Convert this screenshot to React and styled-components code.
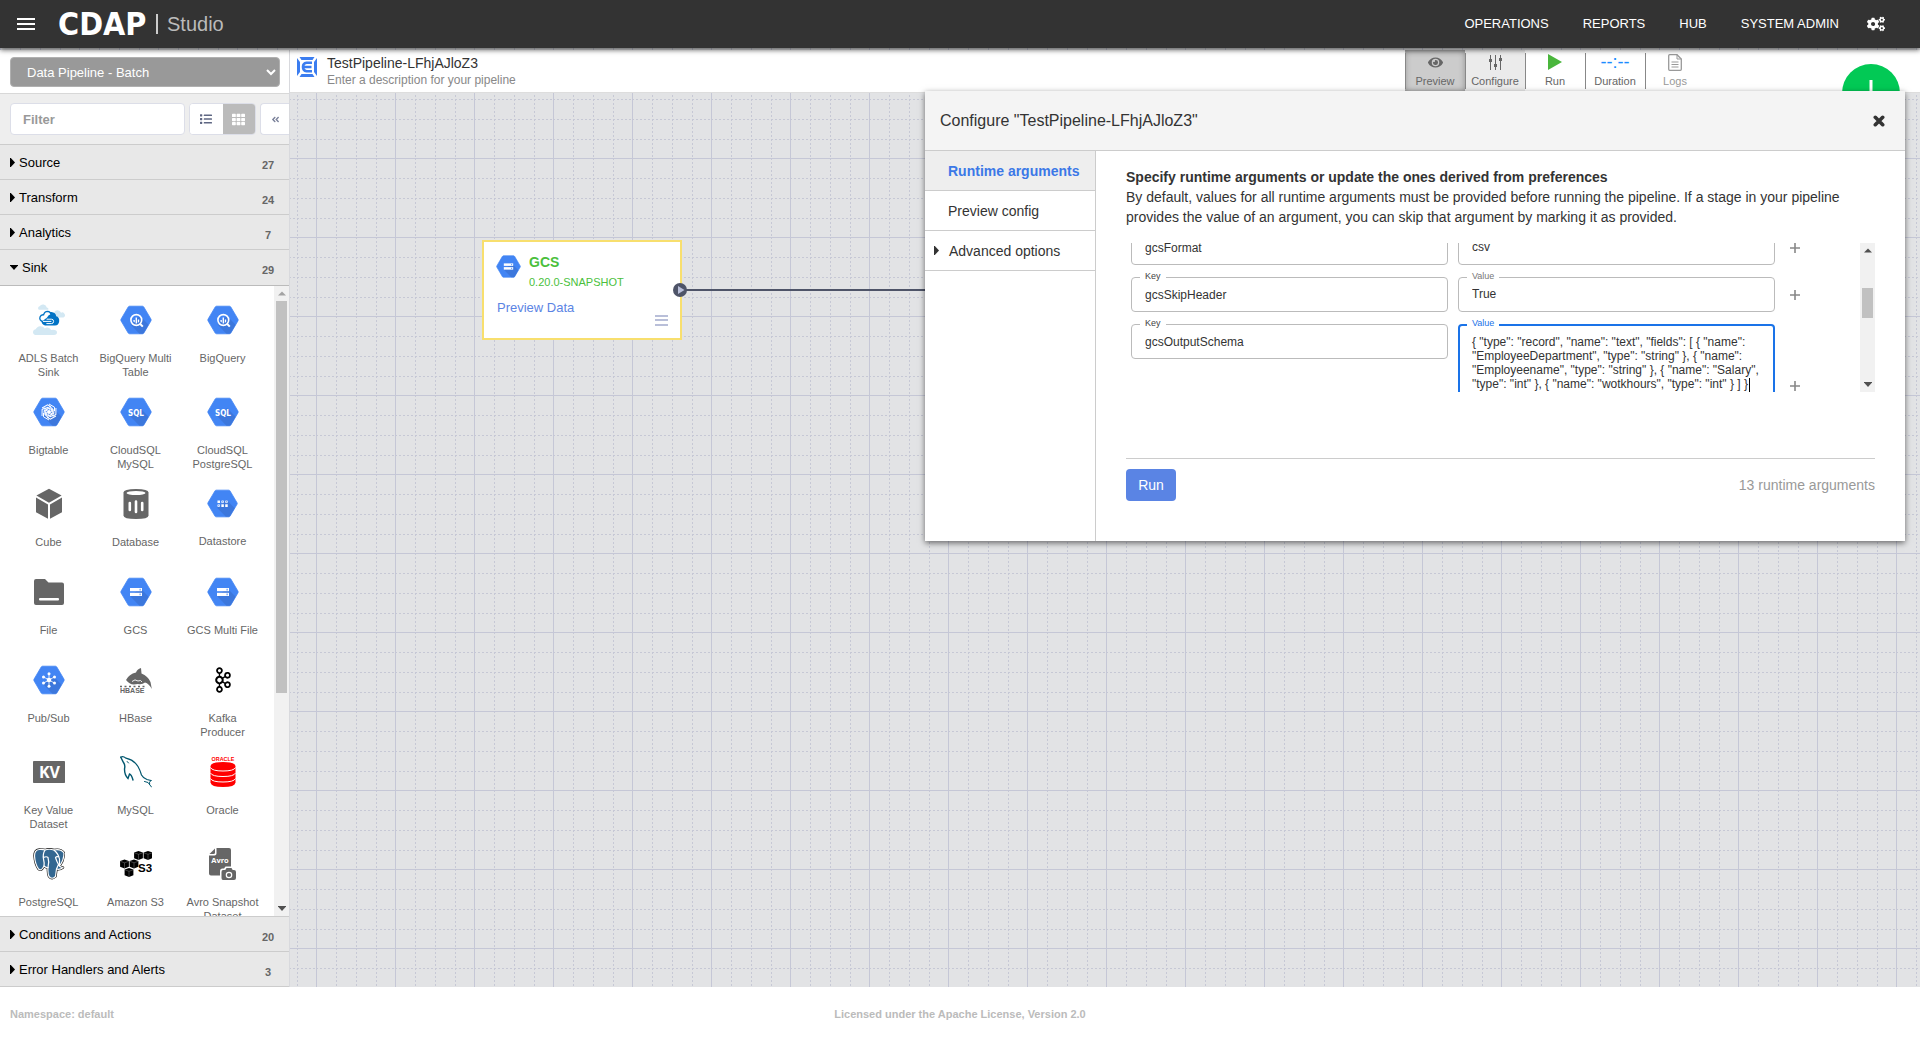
import React from "react";
import styled, { createGlobalStyle, css } from "styled-components";
import { FaAngleDoubleLeft, FaCogs, FaEye, FaList, FaTh } from "react-icons/fa";
import { SiApachekafka } from "react-icons/si";

const GlobalStyle = createGlobalStyle`
  *, *::before, *::after { box-sizing: border-box; }
  body {
    margin: 0;
    background: #fff;
    color: #333;
    font-family: "Liberation Sans", Arial, sans-serif;
    font-size: 13px;
  }
  button, input, select, textarea { font: inherit; color: inherit; margin: 0; }
  svg { display: block; }
`;

const plainButton = css`
  appearance: none;
  border: 0;
  padding: 0;
  background: none;
  cursor: pointer;
`;

/* ---------- page frame ---------- */

const Page = styled.div`
  display: flex;
  flex-direction: column;
  height: 100vh;
`;

const Body = styled.main`
  position: relative;
  display: flex;
  flex: 1;
  min-height: 0;
  padding-top: 2px;
  background: #e2e3e5;
`;

const GridBackdrop = styled.svg`
  position: absolute;
  inset: 0;
  width: 100%;
  height: 100%;
`;

const Footer = styled.footer`
  display: grid;
  grid-template-columns: 1fr auto 1fr;
  align-items: center;
  flex: none;
  height: 53px;
  padding: 0 10px;
  background: #fff;
  color: #bbb;
  font-size: 11px;
  font-weight: bold;
`;

/* ---------- header ---------- */

const Header = styled.header`
  position: relative;
  z-index: 5;
  display: flex;
  align-items: center;
  flex: none;
  height: 48px;
  padding: 0 35px 0 17px;
  background: #333;
  box-shadow: 0 2px 5px rgba(0, 0, 0, 0.6);
  color: #fff;
`;

const IconButton = styled.button`
  ${plainButton}
  display: flex;
  align-items: center;
  justify-content: center;
  color: inherit;
`;

const Brand = styled.a`
  display: flex;
  align-items: center;
  margin-left: 23px;
  color: #fff;
  text-decoration: none;
`;

const Wordmark = styled.span`
  width: 98px;
  font: bold 32px/48px "DejaVu Sans Condensed", "DejaVu Sans", sans-serif;
`;

const Product = styled.span`
  padding-left: 9px;
  border-left: 2px solid #ccc;
  color: #bbb;
  font-size: 20px;
  line-height: 20px;
`;

const Nav = styled.nav`
  display: flex;
  margin-left: auto;
  margin-right: 11px;
`;

const NavLink = styled.a`
  padding: 0 17px;
  color: #fff;
  text-decoration: none;
  line-height: 48px;
`;

/* ---------- sidebar ---------- */

const Sidebar = styled.aside`
  position: relative;
  display: flex;
  flex-direction: column;
  flex: none;
  width: 290px;
  overflow: hidden;
  border-right: 1px solid #d8d9dd;
  background: #fff;
`;

const TypePicker = styled.div`
  position: relative;
  flex: none;
  padding: 7px 9px 6px 10px;
  border-bottom: 1px solid #d8d8d8;

  svg {
    position: absolute;
    top: 19px;
    right: 13px;
    pointer-events: none;
  }
`;

const TypeSelect = styled.select`
  appearance: none;
  display: block;
  width: 100%;
  height: 30px;
  padding: 0 16px;
  border: 1px solid #b0b0b0;
  border-radius: 4px;
  background: #999;
  color: #fff;
`;

const FilterBar = styled.div`
  display: flex;
  gap: 4px;
  flex: none;
  height: 51px;
  padding: 9px 0 9px 10px;
  border-bottom: 1px solid #ccc;
  background: #eee;
`;

const FilterInput = styled.input`
  width: 175px;
  height: 32px;
  padding: 0 12px;
  border: 1px solid #dcdee8;
  border-radius: 4px;
  background: #fff;

  &::placeholder {
    color: #999;
    font-weight: bold;
    opacity: 1;
  }
`;

const ViewToggle = styled.div`
  display: flex;
  width: 67px;
  height: 32px;
  overflow: hidden;
  border: 1px solid #dcdee8;
  border-radius: 4px;
  background: #fff;
`;

const ViewButton = styled(IconButton)`
  flex: 1;
  background: ${(p) => (p.$active ? "#bbb" : "#fff")};
  color: ${(p) => (p.$active ? "#fff" : "#5f6783")};
`;

const CollapseButton = styled(IconButton)`
  flex: 1;
  height: 32px;
  border: 1px solid #dcdee8;
  border-right: 0;
  border-radius: 4px 0 0 4px;
  background: #fff;
  color: #7a819a;
`;

const GroupButton = styled.button`
  ${plainButton}
  display: flex;
  align-items: center;
  flex: none;
  gap: 4px;
  width: 100%;
  height: ${(p) => (p.$open ? "36px" : "35px")};
  padding: 0 15px 0 10px;
  border-bottom: 1px solid ${(p) => (p.$open ? "#bbb" : "#ccc")};
  background: #e8e8e8;
  color: #000;
  text-align: left;
`;

const Count = styled.span`
  width: 12px;
  margin-left: auto;
  padding-top: 5px;
  color: #666;
  font-size: 11px;
  font-weight: bold;
  text-align: center;
`;

const PluginPanel = styled.div`
  display: flex;
  flex: 1;
  min-height: 0;
  border-bottom: 1px solid #ccc;
`;

const PluginGrid = styled.ul`
  display: grid;
  grid-template-columns: repeat(3, 1fr);
  align-content: start;
  flex: 1;
  margin: 0;
  padding: 9px 8px 0 5px;
  overflow: hidden;
  list-style: none;
`;

const PluginButton = styled.button`
  ${plainButton}
  display: flex;
  flex-direction: column;
  align-items: center;
  gap: 15px;
  width: 100%;
  min-height: 88px;
  padding: 9px 6px 8px;
  color: #666;
  font-size: 11px;
  line-height: 14px;
`;

const ScrollTrack = styled.div`
  display: flex;
  flex-direction: column;
  align-items: center;
  flex: none;
  width: 15px;
  background: #f1f1f1;
`;

const ScrollArrow = styled.span`
  display: flex;
  align-items: center;
  justify-content: center;
  flex: none;
  width: 15px;
  height: 15px;
  color: ${(p) => (p.$dim ? "#a3a3a3" : "#505050")};
`;

const ScrollGap = styled.span`
  flex: ${(p) => p.$share};
`;

const ScrollThumb = styled.span`
  flex: ${(p) => p.$share};
  width: 11px;
  background: #c1c1c1;
`;

/* ---------- pipeline bar and canvas ---------- */

const Workspace = styled.section`
  position: relative;
  display: flex;
  flex: 1;
  flex-direction: column;
  min-width: 0;
`;

const PipelineBar = styled.div`
  display: flex;
  flex: none;
  height: 43px;
  padding-left: 7px;
  border-bottom: 1px solid #ddd;
  background: #fff;
`;

const PipelineIcon = styled.svg`
  margin-top: 7px;
`;

const PipelineText = styled.div`
  padding: 4px 0 0 10px;
`;

const PipelineName = styled.h1`
  margin: 0;
  font-size: 14px;
  font-weight: normal;
  line-height: 18px;
`;

const PipelineDescription = styled.p`
  margin: 0;
  color: #888;
  font-size: 12px;
  line-height: 16px;
`;

const Tools = styled.div`
  display: flex;
  margin: 0 215px 0 auto;
`;

const Tool = styled.button`
  ${plainButton}
  position: relative;
  display: flex;
  flex-direction: column;
  align-items: center;
  width: 60px;
  height: 41px;
  background: ${(p) => p.$fill || "transparent"};
  box-shadow: ${(p) => (p.$pressed ? "inset 0 1px 6px rgba(0, 0, 0, 0.3)" : "none")};
  color: ${(p) => (p.$faded ? "#999" : "#666")};
  font-size: 11px;
  line-height: 14px;

  &::before {
    content: "";
    position: absolute;
    top: 3px;
    bottom: 2px;
    left: 0;
    border-left: 1px solid #888;
  }
`;

const ToolGlyph = styled.span`
  display: flex;
  align-items: center;
  justify-content: center;
  height: 24px;
  color: ${(p) => p.$color || "inherit"};
  font-size: 18px;
`;

const AddButton = styled.button`
  ${plainButton}
  position: absolute;
  top: 14px;
  right: 20px;
  display: flex;
  align-items: center;
  justify-content: center;
  width: 58px;
  height: 58px;
  border-radius: 50%;
  background: #02c955;
`;

const Canvas = styled.div`
  position: relative;
  flex: 1;
  overflow: hidden;
`;

const Connection = styled.svg`
  position: absolute;
  top: 190px;
  left: 383px;
`;

const Node = styled.article`
  position: absolute;
  top: 147px;
  left: 192px;
  display: grid;
  grid-template-columns: 25px 1fr;
  column-gap: 8px;
  align-content: start;
  width: 200px;
  height: 100px;
  padding: 10px 12px;
  border: 2px solid #f8df6e;
  background: #fff;
`;

const NodeIcon = styled.div`
  padding-top: 2px;
`;

const NodeTitle = styled.div`
  color: #4bbf3c;
  font-size: 11px;
  line-height: 20px;

  strong {
    display: block;
    font-size: 14px;
  }
`;

const NodeLink = styled.a`
  grid-column: 1 / -1;
  padding-top: 8px;
  padding-left: 1px;
  color: #5b84e4;
  line-height: 15px;
  text-decoration: none;
`;

const NodeMenu = styled(IconButton)`
  position: absolute;
  right: 12px;
  bottom: 12px;
`;

/* ---------- configure dialog ---------- */

const Dialog = styled.section`
  position: absolute;
  top: 41px;
  right: 15px;
  width: 980px;
  background: #fff;
  box-shadow: 0 2px 6px rgba(0, 0, 0, 0.55);
`;

const DialogHeader = styled.header`
  display: flex;
  align-items: center;
  justify-content: space-between;
  height: 60px;
  padding: 0 20px 0 15px;
  border-bottom: 1px solid #ccc;
  background: #f4f4f4;

  h2 {
    margin: 0;
    font-size: 16px;
    font-weight: normal;
  }
`;

const DialogBody = styled.div`
  display: flex;
  min-height: 390px;
`;

const Tabs = styled.nav`
  flex: none;
  width: 171px;
  border-right: 1px solid #ccc;
`;

const Tab = styled.button`
  ${plainButton}
  display: flex;
  align-items: center;
  gap: 10px;
  width: 100%;
  height: 40px;
  padding-left: ${(p) => (p.$nested ? "9px" : "23px")};
  border-bottom: 1px solid #ccc;
  background: ${(p) => (p.$active ? "#eee" : "#fff")};
  color: ${(p) => (p.$active ? "#3b78e7" : "#333")};
  font-size: 14px;
  font-weight: ${(p) => (p.$active ? "bold" : "normal")};
`;

const Content = styled.div`
  flex: 1;
  min-width: 0;
  padding: 16px 30px 0;
  font-size: 14px;
  line-height: 20px;

  p { margin: 0 0 16px; }
  strong { display: block; }
`;

const ArgumentArea = styled.div`
  display: flex;
  height: 149px;
  overflow: hidden;
`;

const ArgumentList = styled.div`
  display: flex;
  flex: 1;
  flex-direction: column;
  gap: 12px;
  margin-top: -13px;
  padding-left: 5px;
`;

const ArgumentRow = styled.div`
  display: flex;
  align-items: flex-start;
  flex: none;
  gap: 10px;

  > button { align-self: center; }
`;

const Field = styled.div`
  position: relative;
  flex: none;
  width: 317px;
`;

const FieldLabel = styled.label`
  position: absolute;
  top: -6px;
  left: 9px;
  padding: 0 5px;
  background: #fff;
  color: ${(p) => p.$color};
  font-size: 9px;
  line-height: 11px;
`;

const boxed = css`
  display: block;
  width: 100%;
  border: 1px solid #bbb;
  border-radius: 4px;
  background: #fff;
  color: #333;
  font-size: 12px;
  outline: none;
`;

const FieldInput = styled.input`
  ${boxed}
  height: 35px;
  padding: ${(p) => (p.$raised ? "0 13px 2px" : "0 13px")};
`;

const FieldArea = styled.textarea`
  ${boxed}
  height: 124px;
  padding: 9px 12px;
  border: 2px solid #1a73e8;
  line-height: 14px;
  resize: none;
  overflow: hidden;
`;

const TextCursor = styled.span`
  position: absolute;
  top: 54px;
  right: 25px;
  width: 1px;
  height: 14px;
  background: #000;
`;

const AddRow = styled(IconButton)`
  width: 20px;
  height: 24px;
`;

const DialogFooter = styled.div`
  display: flex;
  align-items: center;
  justify-content: space-between;
  margin-top: 66px;
  padding-top: 10px;
  border-top: 1px solid #ccc;
  color: #999;
`;

const RunButton = styled.button`
  ${plainButton}
  width: 50px;
  height: 32px;
  border-radius: 4px;
  background: #5a84e4;
  color: #fff;
`;

/* ---------- drawings ---------- */

const Bars = ({ width, height, color }) => (
  <svg width={width} height={height} fill={color} aria-hidden="true">
    <rect width={width} height="2" />
    <rect y={Math.floor((height - 2) / 2)} width={width} height="2" />
    <rect y={height - 2} width={width} height="2" />
  </svg>
);

const CaretRight = () => (
  <svg width="5" height="9" aria-hidden="true"><path d="M0 0H.8L5 4.500L.8 9H0z" fill="currentColor" /></svg>
);
const CaretDown = () => (
  <svg width="8" height="5" aria-hidden="true"><path d="M0 0H8V.5L4 5L0 .5z" fill="currentColor" /></svg>
);
const CaretUp = () => (
  <svg width="8" height="5" aria-hidden="true"><path d="M0 4.500H8L4 .5z" fill="currentColor" /></svg>
);

const Plus = () => (
  <svg width="10" height="10" stroke="#888" strokeWidth="1.600" aria-hidden="true"><path d="M5 0V10M0 5H10" /></svg>
);

const Cross = () => (
  <svg width="12" height="12" stroke="#333" strokeWidth="3.600" strokeLinecap="round" aria-hidden="true"><path d="M2.300 2.300L9.700 9.700M9.700 2.300L2.300 9.700" /></svg>
);

const HEX = "M9.6 2.2H22.4Q23.3 2.2 23.8 3L31 15.2Q31.4 16 31 16.8L23.8 29Q23.3 29.8 22.4 29.8H9.6Q8.7 29.8 8.2 29L1 16.8Q.6 16 1 15.2L8.2 3Q8.7 2.2 9.6 2.2z";

const Hex = ({ size = 32, shade = "M20 12L28.6 20.8L23.8 29Q23.3 29.8 22.4 29.8H19.5L10.5 20.5z", children }) => (
  <svg width={size} height={size} viewBox="0 0 32 32" aria-hidden="true">
    <path d={HEX} fill="#4285f4" stroke="#4285f4" strokeWidth=".8" />
    <path d={shade} fill="#3b73d6" opacity=".8" />
    {children}
  </svg>
);

const StorageHex = ({ size }) => (
  <Hex size={size}>
    <rect x="10" y="12" width="12" height="3.2" fill="#fff" />
    <rect x="10" y="16.800" width="12" height="3.2" fill="#fff" />
    <path d="M19.6 12.8h1v1.6h-1zM19.6 17.600h1v1.6h-1z" fill="#4285f4" />
  </Hex>
);

const QueryHex = () => (
  <Hex>
    <circle cx="16.3" cy="16" r="5.4" fill="none" stroke="#fff" strokeWidth="1.6" />
    <path d="M20.2 20L22.8 22.6" stroke="#fff" strokeWidth="2" />
    <path d="M13.4 16h1.4v2.6l-1.4-1zM15.6 13.4h1.4v6h-1.4zM17.8 15.4h1.4v2.4l-1.4 1.2z" fill="#fff" />
  </Hex>
);

const SqlHex = () => (
  <Hex>
    <text x="16" y="19.500" textAnchor="middle" fill="#fff" fontSize="8" fontWeight="bold" fontFamily="'DejaVu Sans Condensed', sans-serif">SQL</text>
  </Hex>
);

const BigtableHex = () => (
  <Hex>
    <g fill="none" stroke="#fff" strokeWidth="1">
      {[0, 60, 120, 180, 240, 300].map((turn) => (
        <path key={turn} transform={`rotate(${turn} 16 16)`} d="M16 8L21.5 11.2V15M16 10.4L19.4 12.4V16M14 12L17.5 13.6" />
      ))}
    </g>
    <circle cx="16" cy="16" r="2" fill="#fff" />
  </Hex>
);

const DatastoreHex = () => (
  <Hex size={31}>
    <g fill="none" stroke="#fff" strokeWidth=".8">
      <path d="M15.200 13.300h1.800v1.800h-1.800zM19.200 13.300h1.800v1.800h-1.800zM11.200 17.300h1.800v1.800h-1.800z" />
    </g>
    <path d="M10.800 12.900h2.600v2.600h-2.600zM14.800 16.900h2.600v2.600h-2.600zM18.800 16.900h2.600v2.600h-2.600z" fill="#fff" />
  </Hex>
);

const PubSubHex = () => (
  <Hex>
    <path d="M16 16V9.6M16 16V22.4M16 16L10.4 12.8M16 16L21.6 12.8M16 16L10.4 19.2M16 16L21.6 19.2" stroke="#fff" strokeWidth=".8" />
    <circle cx="16" cy="16" r="2.3" fill="#fff" />
    {[[16, 9.7], [16, 22.3], [10.5, 12.9], [21.5, 12.9], [10.5, 19.1], [21.5, 19.1]].map(([x, y]) => (
      <circle key={`${x}-${y}`} cx={x} cy={y} r="1.5" fill="#fff" />
    ))}
  </Hex>
);

const Adls = () => (
  <svg width="32" height="32" viewBox="0 0 32 32" aria-hidden="true">
    <path d="M6 5.8a2 2 0 0 1 .6-3.6 4 4 0 0 1 7.2 1.3 1.7 1.7 0 0 1 1.4 2.3zM21 13.5V9a3.6 3.6 0 0 1 7-.2 2.5 2.5 0 0 1 2.5 4.7zM2 31a3 3 0 0 1 .6-5.8 5.4 5.4 0 0 1 9.2-.8A4 4 0 0 1 18 26q6-.8 6 2.6 0 2.4-3 2.4z" fill="#d3e8f3" />
    <path d="M12 21.5a4.6 4.6 0 0 1 .4-9q1.6-5 6-4.5 4.3.5 4.8 4.3 3.3.8 3 5-.5 4.2-4.2 4.2z" fill="#0273c5" />
    <path d="M10 17.600Q6 16.500 7 13q1-2.600 3.600-2.200.8-3.400 4-3.400 2.800.3 3.500 3.200Q15.500 11.500 14.500 14z" fill="#fff" stroke="#0273c5" strokeWidth="1.3" />
    <path d="M10 17.400h8.400M13.600 15.200h4.800a1.400 1.400 0 1 1 0 4.400h-5" fill="none" stroke="#fff" strokeWidth="1" />
  </svg>
);

const Cube = () => (
  <svg width="32" height="32" viewBox="0 0 32 32" fill="#666" aria-hidden="true">
    <path d="M16 .8L28.6 7.6L16 14.8L3.4 7.6zM3 9.6L15 16.6V30.8L3 24.2zM29 9.6L17 16.6V30.8L29 24.2z" />
  </svg>
);

const Database = () => (
  <svg width="32" height="32" viewBox="0 0 32 32" aria-hidden="true">
    <path d="M3.5 4.5Q3.5 1 16 1T28.500 4.500V27.500Q28.500 31 16 31T3.500 27.500z" fill="#666" />
    <ellipse cx="16" cy="5" rx="9.500" ry="2" fill="#fff" />
    <path d="M9.800 15V22M16 13.500V24M22.200 15V22" stroke="#fff" strokeWidth="2.600" strokeLinecap="round" />
  </svg>
);

const Folder = () => (
  <svg width="32" height="32" viewBox="0 0 32 32" aria-hidden="true">
    <path d="M3 3H12L15.500 6.500H29Q31 6.500 31 8.500V27Q31 29 29 29H3Q1 29 1 27V5Q1 3 3 3z" fill="#666" />
    <rect x="6" y="22" width="20" height="2.400" rx="1" fill="#fff" />
  </svg>
);

const HBase = () => (
  <svg width="32" height="32" viewBox="0 0 32 32" aria-hidden="true">
    <path d="M6 16Q9 10 16 8.500Q17 5 21 4L21.500 9.500Q28 12 30.500 18L31.800 25Q29 19.500 25 18.500Q22 21 18 20Q12 21 10 19.500Q8 18.500 6 16z" fill="#666" />
    <path d="M12 17.500Q15 14.500 18 17Q21 15.500 22 18" fill="none" stroke="#fff" strokeWidth=".9" />
    <path d="M0 22.500H27" stroke="#666" strokeWidth="1.500" strokeDasharray="2 2.500" />
    <text x="0" y="28.500" fill="#666" fontSize="7" fontWeight="bold" fontFamily="'Liberation Sans', sans-serif">HBASE</text>
  </svg>
);

const KeyValue = () => (
  <svg width="32" height="32" viewBox="0 0 32 32" aria-hidden="true">
    <rect y="5" width="32" height="22" rx=".8" fill="#666" />
    <text x="16.500" y="21.700" textAnchor="middle" fill="#fff" fontSize="16" fontWeight="bold" fontFamily="'Open Sans', sans-serif">KV</text>
  </svg>
);

const MySql = () => (
  <svg width="32" height="32" viewBox="0 0 32 32" fill="none" stroke="#00566e" strokeLinecap="round" aria-hidden="true">
    <path d="M.8 1.200Q3-.2 6 2.200Q14 4 18 10.500Q20 14 21.500 19Q23 22 27 23.500L31 24.500" strokeWidth="1.200" />
    <path d="M.8 1.200L3.500 6.500Q5.500 9 4.500 13Q4.500 19 8 22.500L9.500 18Q11.500 18.500 13 24" strokeWidth="1.400" />
    <path d="M24.500 25.500L28 26.500L31.500 31M31 24.500Q28.500 26 29.500 28" strokeWidth="1" />
    <path d="M7.200 5.500L8.500 7" strokeWidth="1" />
  </svg>
);

const Oracle = () => (
  <svg width="32" height="32" viewBox="0 0 32 32" aria-hidden="true">
    <text x="16" y="4.500" textAnchor="middle" fill="#f00" fontSize="5.400" fontWeight="bold" fontFamily="'Liberation Sans', sans-serif">ORACLE</text>
    <path d="M3.500 10Q4 6 16 6T28.500 10V26.500Q28 31 16 31T3.500 26.500z" fill="#f00" />
    <path d="M3.500 11.500Q5 15 16 15T28.500 11.500M3.500 17Q5 20.500 16 20.500T28.500 17M3.500 22.500Q5 26 16 26T28.500 22.500" fill="none" stroke="#fff" strokeWidth="1" />
  </svg>
);

const Postgres = () => (
  <svg width="32" height="32" viewBox="0 0 32 32" strokeLinejoin="round" strokeLinecap="round" aria-hidden="true">
    <g stroke="#111" strokeWidth="2.400" fill="#111">
      <path d="M6 1.500Q1.500 2 1.500 8Q2 16 5.500 21Q7.500 23 9.500 20.500L11 18Q13 20 15 19.500Q14.500 25 16 28.500Q19 32 22.500 28.500L23.500 21Q27 22 30 19.500Q28 19.500 26.500 18Q31 12 31 5Q28 .5 21 2Q16 .5 12 2Q9 1 6 1.500z" />
    </g>
    <g stroke="#fff" strokeWidth="1.200" fill="#336791">
      <path d="M6 1.500Q1.500 2 1.500 8Q2 16 5.500 21Q7.500 23 9.500 20.500L11 18Q13 20 15 19.500Q14.500 25 16 28.500Q19 32 22.500 28.500L23.500 21Q27 22 30 19.500Q28 19.500 26.500 18Q31 12 31 5Q28 .5 21 2Q16 .5 12 2Q9 1 6 1.500z" />
      <path d="M12 2Q9.500 6 10.500 11Q11.500 15 11 18M10.500 9.500Q13.500 8 15 9.500Q16.500 14 15 19.500" fill="none" />
      <path d="M21 2Q25.500 6 26.500 11Q26.500 15 26.500 18M26 9Q23.500 8 22.500 9.500Q23.500 13 25.500 16.500L23.500 21" fill="none" />
    </g>
  </svg>
);

const S3 = () => (
  <svg width="32" height="32" viewBox="0 0 32 32" aria-hidden="true">
    {[[14, 3], [23.500, 3], [0, 11.500], [9.500, 11.500], [4.500, 20]].map(([x, y]) => (
      <g key={`${x}-${y}`} transform={`translate(${x} ${y})`}>
        <path d="M4.500 0L8.900 1.500V7.200L4.500 9L.1 7.200V1.500z" />
        <path d="M.3 1.800L4.500 3.300L8.700 1.800M4.500 3.300V9" fill="none" stroke="#999" strokeWidth=".4" />
      </g>
    ))}
    <text x="18" y="24" fontSize="11.500" fontWeight="bold" fontFamily="'Liberation Sans', sans-serif">S3</text>
  </svg>
);

const Avro = () => (
  <svg width="32" height="32" viewBox="0 0 32 32" aria-hidden="true">
    <path d="M9.500 0H22Q24 0 24 2V18.500H18.500L17 20.500H15.500Q13 20.500 13 23V27.500H4Q2 27.500 2 25.500V7.500H7.500Q9.500 7.500 9.500 5.500z" fill="#666" />
    <path d="M2.500 6L8 .500V4.500Q8 6 6.500 6z" fill="#666" />
    <text x="13" y="15" textAnchor="middle" fill="#fff" fontSize="7.500" fontWeight="bold" fontFamily="'Open Sans', sans-serif">Avro</text>
    <path d="M16 22H18.300L19.500 20H24.500L25.700 22H27Q29 22 29 24V30Q29 32 27 32H16Q14.500 32 14.500 30V24Q14.500 22 16 22z" fill="#666" />
    <circle cx="22" cy="27" r="2.700" fill="none" stroke="#fff" strokeWidth="1.200" />
  </svg>
);

const Sliders = () => (
  <svg width="13" height="15" viewBox="0 0 13 15" fill="#666" aria-hidden="true">
    <path d="M1 0h1v15H1zM6 0h1v15H6zM11 0h1v15h-1z" />
    <rect y="4" width="3" height="3" /><rect x="5" y="9" width="3" height="3" /><rect x="10" y="3" width="3" height="3" />
  </svg>
);

const Play = () => (
  <svg width="14" height="16" aria-hidden="true"><path d="M0 0L14 8L0 16z" fill="#4ab63c" /></svg>
);

const LogFile = () => (
  <svg width="14" height="17" viewBox="0 0 14 17" fill="none" stroke="#999" aria-hidden="true">
    <path d="M.7 1.700Q.7.7 1.700.7H9L13.300 5V15.300Q13.300 16.300 12.300 16.300H1.700Q.7 16.300.7 15.300z" strokeWidth="1.300" />
    <path d="M9 .7V5H13.300M3.500 8H10.500M3.500 10.500H10.500M3.500 13H10.500" />
  </svg>
);

/* ---------- data ---------- */

const sinks = [
  ["ADLS Batch Sink", <Adls />],
  ["BigQuery Multi Table", <QueryHex />],
  ["BigQuery", <QueryHex />],
  ["Bigtable", <BigtableHex />],
  ["CloudSQL MySQL", <SqlHex />],
  ["CloudSQL PostgreSQL", <SqlHex />],
  ["Cube", <Cube />],
  ["Database", <Database />],
  ["Datastore", <DatastoreHex />],
  ["File", <Folder />],
  ["GCS", <StorageHex />],
  ["GCS Multi File", <StorageHex />],
  ["Pub/Sub", <PubSubHex />],
  ["HBase", <HBase />],
  ["Kafka Producer", <SiApachekafka size={32} viewBox="-3 -3 30 30" color="#000" />],
  ["Key Value Dataset", <KeyValue />],
  ["MySQL", <MySql />],
  ["Oracle", <Oracle />],
  ["PostgreSQL", <Postgres />],
  ["Amazon S3", <S3 />],
  ["Avro Snapshot Dataset", <Avro />],
];

const schema =
  '{ "type": "record", "name": "text", "fields": [ { "name": "EmployeeDepartment", "type": "string" }, { "name": "Employeename", "type": "string" }, { "name": "Salary", "type": "int" }, { "name": "wotkhours", "type": "int" } ] }';

const runtimeArgs = [
  { key: "gcsFormat", value: "csv" },
  { key: "gcsSkipHeader", value: "True" },
  { key: "gcsOutputSchema", value: schema, editing: true },
];

/* ---------- parts ---------- */

const Group = ({ name, count, open }) => (
  <GroupButton type="button" $open={open} aria-expanded={!!open}>
    {open ? <CaretDown /> : <CaretRight />}
    {name}
    <Count>{count}</Count>
  </GroupButton>
);

const Scrollbar = ({ before, thumb, after }) => (
  <ScrollTrack aria-hidden="true">
    <ScrollArrow $dim={before === 0}><CaretUp /></ScrollArrow>
    <ScrollGap $share={before} />
    <ScrollThumb $share={thumb} />
    <ScrollGap $share={after} />
    <ScrollArrow><CaretDown /></ScrollArrow>
  </ScrollTrack>
);

const Argument = ({ name, value, editing }) => (
  <ArgumentRow>
    <Field>
      <FieldInput id={`${name}-key`} defaultValue={name} />
      <FieldLabel htmlFor={`${name}-key`} $color="#444">Key</FieldLabel>
    </Field>
    <Field>
      {editing ? (
        <FieldArea id={`${name}-value`} defaultValue={value} spellCheck={false} />
      ) : (
        <FieldInput id={`${name}-value`} defaultValue={value} $raised />
      )}
      <FieldLabel htmlFor={`${name}-value`} $color={editing ? "#1a73e8" : "#777"}>Value</FieldLabel>
      {editing && <TextCursor />}
    </Field>
    <AddRow type="button" aria-label="Add argument"><Plus /></AddRow>
  </ArgumentRow>
);

const ConfigureDialog = () => (
  <Dialog role="dialog" aria-labelledby="configure-title">
    <DialogHeader>
      <h2 id="configure-title">Configure "TestPipeline-LFhjAJloZ3"</h2>
      <IconButton type="button" aria-label="Close"><Cross /></IconButton>
    </DialogHeader>
    <DialogBody>
      <Tabs>
        <Tab type="button" $active>Runtime arguments</Tab>
        <Tab type="button">Preview config</Tab>
        <Tab type="button" $nested><CaretRight />Advanced options</Tab>
      </Tabs>
      <Content>
        <p>
          <strong>Specify runtime arguments or update the ones derived from preferences</strong>
          By default, values for all runtime arguments must be provided before running the pipeline. If a stage in your
          pipeline provides the value of an argument, you can skip that argument by marking it as provided.
        </p>
        <ArgumentArea>
          <ArgumentList>
            {runtimeArgs.map((a) => (
              <Argument key={a.key} name={a.key} value={a.value} editing={a.editing} />
            ))}
          </ArgumentList>
          <Scrollbar before={30} thumb={30} after={59} />
        </ArgumentArea>
        <DialogFooter>
          <RunButton type="button">Run</RunButton>
          <span>13 runtime arguments</span>
        </DialogFooter>
      </Content>
    </DialogBody>
  </Dialog>
);

export default function App() {
  return (
    <Page>
      <GlobalStyle />
      <Header>
        <IconButton type="button" aria-label="Menu"><Bars width={18} height={12} color="#fff" /></IconButton>
        <Brand href="#">
          <Wordmark>CDAP</Wordmark>
          <Product>Studio</Product>
        </Brand>
        <Nav>
          <NavLink href="#operations">OPERATIONS</NavLink>
          <NavLink href="#reports">REPORTS</NavLink>
          <NavLink href="#hub">HUB</NavLink>
          <NavLink href="#admin">SYSTEM ADMIN</NavLink>
        </Nav>
        <IconButton type="button" aria-label="Settings"><FaCogs size={18} /></IconButton>
      </Header>

      <Body>
        <GridBackdrop aria-hidden="true">
          <defs>
            <pattern id="grid" y="-48" width="79" height="79" patternUnits="userSpaceOnUse">
              <g stroke="#c6c8d5" strokeDasharray="2 2">
                <path d="M20.500 0V79M40.500 0V79M60.500 0V79M0 20.500H79M0 40.500H79M0 60.500H79" />
              </g>
              <path d="M.5 0V79M0 .5H79" stroke="#c5c7d6" />
            </pattern>
          </defs>
          <rect width="100%" height="100%" fill="url(#grid)" />
        </GridBackdrop>

        <Sidebar>
          <TypePicker>
            <TypeSelect aria-label="Pipeline type" defaultValue="batch">
              <option value="batch">Data Pipeline - Batch</option>
            </TypeSelect>
            <svg width="10" height="7" fill="none" stroke="#fff" strokeWidth="2" aria-hidden="true"><path d="M1 1L5 5L9 1" /></svg>
          </TypePicker>
          <FilterBar>
            <FilterInput placeholder="Filter" aria-label="Filter plugins" />
            <ViewToggle>
              <ViewButton type="button" aria-label="List view"><FaList size={12} /></ViewButton>
              <ViewButton type="button" aria-label="Grid view" $active><FaTh size={13} /></ViewButton>
            </ViewToggle>
            <CollapseButton type="button" aria-label="Collapse panel"><FaAngleDoubleLeft size={9} /></CollapseButton>
          </FilterBar>
          <Group name="Source" count={27} />
          <Group name="Transform" count={24} />
          <Group name="Analytics" count={7} />
          <Group name="Sink" count={29} open />
          <PluginPanel>
            <PluginGrid>
              {sinks.map(([name, icon]) => (
                <li key={name}><PluginButton type="button">{icon}{name}</PluginButton></li>
              ))}
            </PluginGrid>
            <Scrollbar before={0} thumb={393} after={209} />
          </PluginPanel>
          <Group name="Conditions and Actions" count={20} />
          <Group name="Error Handlers and Alerts" count={3} />
        </Sidebar>

        <Workspace>
          <PipelineBar>
            <PipelineIcon width="20" height="20" viewBox="0 0 20 20" fill="#3b7df0" aria-hidden="true">
              <path d="M2.500 0H17.500L15.500 3H4.500zM2.500 20H17.500L15.500 17H4.500zM0 1L3 5V15L0 19zM20 1L17 5V15L20 19z" />
              <path d="M15 5.800H9.500Q6 6.200 6 10T9.500 14.200H15M7 10H14.500" fill="none" stroke="#3b7df0" strokeWidth="2.600" />
            </PipelineIcon>
            <PipelineText>
              <PipelineName>TestPipeline-LFhjAJloZ3</PipelineName>
              <PipelineDescription>Enter a description for your pipeline</PipelineDescription>
            </PipelineText>
            <Tools>
              <Tool type="button" $fill="#ccc" $pressed><ToolGlyph><FaEye size={15} /></ToolGlyph>Preview</Tool>
              <Tool type="button" $fill="#ebebeb"><ToolGlyph><Sliders /></ToolGlyph>Configure</Tool>
              <Tool type="button"><ToolGlyph><Play /></ToolGlyph>Run</Tool>
              <Tool type="button"><ToolGlyph $color="#1a8cff">--:--</ToolGlyph>Duration</Tool>
              <Tool type="button" $faded><ToolGlyph><LogFile /></ToolGlyph>Logs</Tool>
            </Tools>
          </PipelineBar>

          <Canvas>
            <Node>
              <NodeIcon><StorageHex size={25} /></NodeIcon>
              <NodeTitle><strong>GCS</strong>0.20.0-SNAPSHOT</NodeTitle>
              <NodeLink href="#preview">Preview Data</NodeLink>
              <NodeMenu type="button" aria-label="Node menu"><Bars width={13} height={11} color="#b9bfd9" /></NodeMenu>
            </Node>
            <Connection width="300" height="14" aria-hidden="true">
              <path d="M7 7H300" stroke="#4e5468" strokeWidth="2" />
              <circle cx="7" cy="7" r="7" fill="#4e5468" />
              <path d="M5 3L11.500 7L5 11z" fill="#b9bfd9" />
            </Connection>
          </Canvas>

          <AddButton type="button" aria-label="Add entity">
            <svg width="26" height="26" stroke="#fff" strokeWidth="3" aria-hidden="true"><path d="M13 0V26M0 13H26" /></svg>
          </AddButton>
          <ConfigureDialog />
        </Workspace>
      </Body>

      <Footer>
        <span>Namespace: default</span>
        <span>Licensed under the Apache License, Version 2.0</span>
      </Footer>
    </Page>
  );
}
